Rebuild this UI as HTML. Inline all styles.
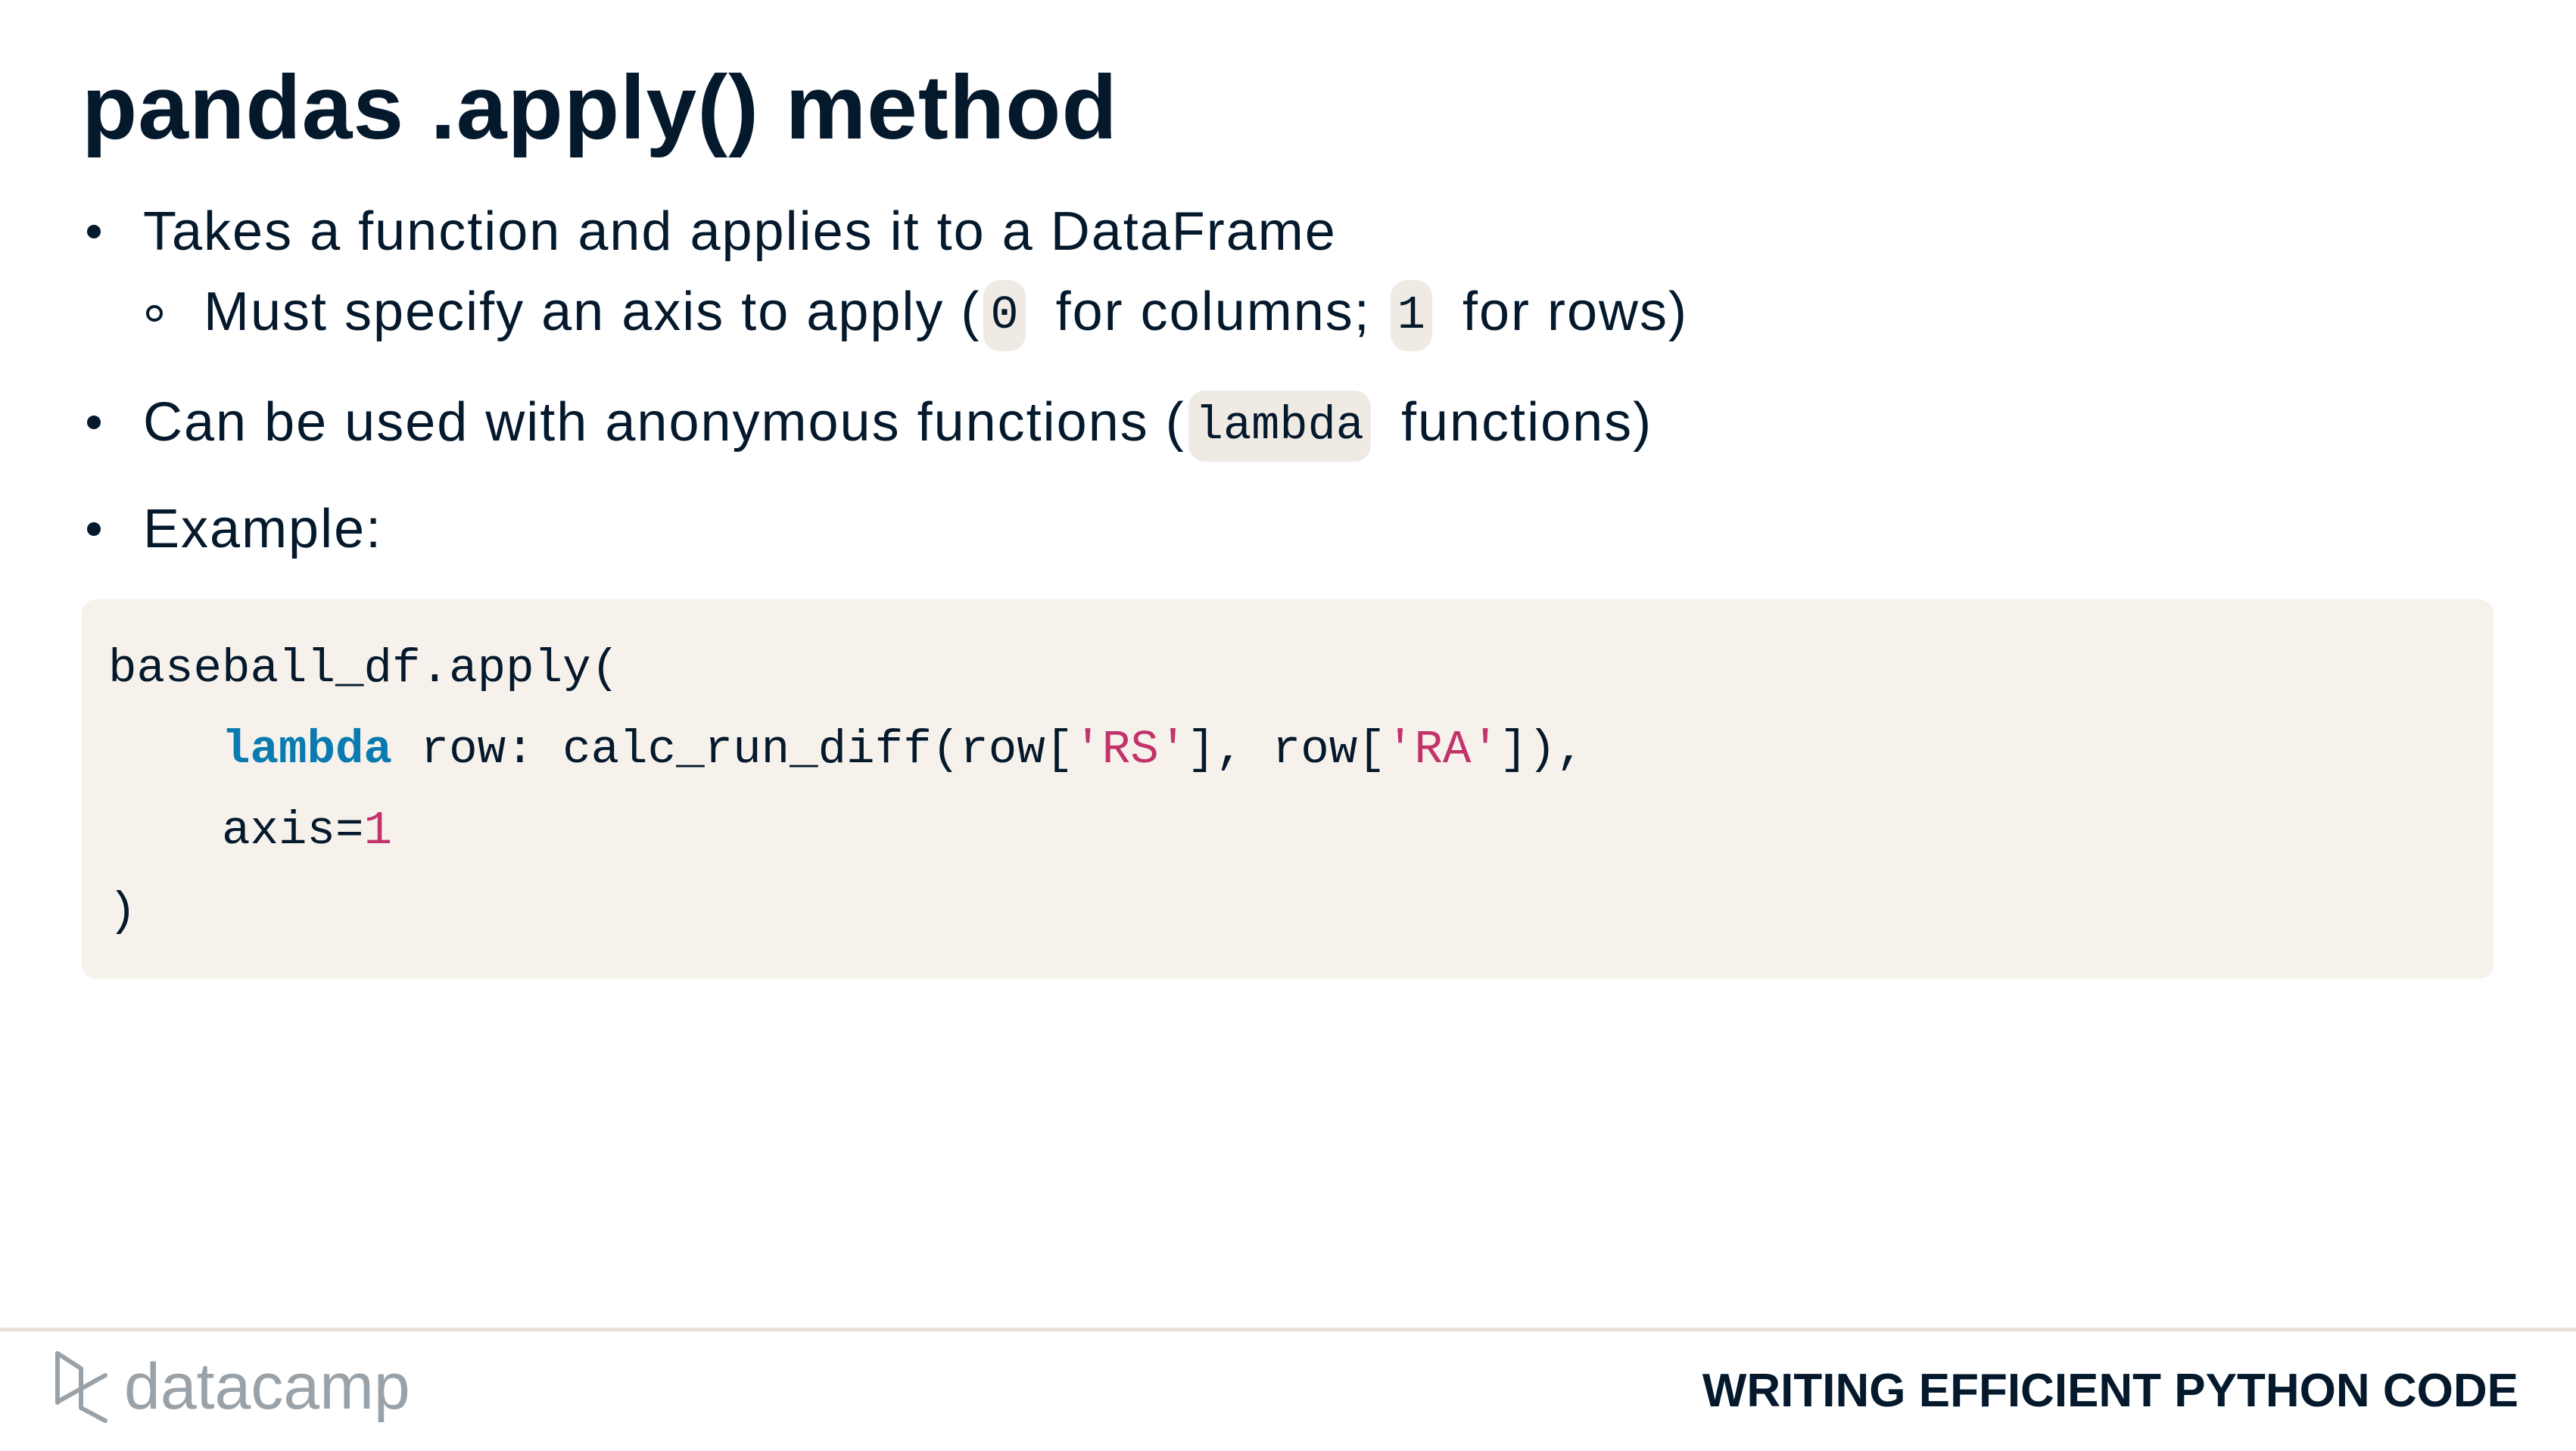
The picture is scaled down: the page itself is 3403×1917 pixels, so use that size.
<!DOCTYPE html>
<html><head><meta charset="utf-8"><style>
body{margin:0;width:3403px;height:1917px;background:#fff;position:relative;overflow:hidden;font-family:"Liberation Sans",sans-serif;color:#05192d}
.a{position:absolute;white-space:nowrap}
h1{position:absolute;left:108px;top:73px;margin:0;font-size:120px;font-weight:bold;letter-spacing:1px}
.t{font-size:72px;line-height:100px;letter-spacing:2px}
.c{display:inline-block;background:#efebe4;border-radius:22px;font-family:"Liberation Mono",monospace;font-size:62px;line-height:94px;padding:0 9px;vertical-align:middle;margin:0 40px 0 4px;letter-spacing:0}
.dot{position:absolute;width:18px;height:18px;border-radius:50%;background:#05192d}
.circ{position:absolute;width:14px;height:14px;border-radius:50%;border:4px solid #05192d}
.code{position:absolute;left:108px;top:792px;width:3186px;height:501px;background:#f6f2eb;border-radius:18px}
.code pre{margin:0;position:absolute;left:35px;top:38px;font-family:"Liberation Mono",monospace;font-size:62.5px;line-height:107px;color:#05192d}
.k{color:#0a7bb0;font-weight:bold}.s{color:#c2336c}
</style></head><body>
<h1>pandas .apply() method</h1>
<div class="dot" style="left:115px;top:297px"></div>
<div class="a t" style="left:189px;top:256px">Takes a function and applies it to a DataFrame</div>
<div class="circ" style="left:193px;top:403px"></div>
<div class="a t" style="left:269px;top:362px">Must specify an axis to apply (<span class="c">0</span>for columns; <span class="c">1</span>for rows)</div>
<div class="dot" style="left:115px;top:549px"></div>
<div class="a t" style="left:189px;top:508px">Can be used with anonymous functions (<span class="c">lambda</span>functions)</div>
<div class="dot" style="left:115px;top:690px"></div>
<div class="a t" style="left:189px;top:649px">Example:</div>
<div class="code"><pre>baseball_df.apply(
    <span class="k">lambda</span> row: calc_run_diff(row[<span class="s">'RS'</span>], row[<span class="s">'RA'</span>]),
    axis=<span class="s">1</span>
)</pre></div>
<div class="a" style="left:0;top:1754px;width:3403px;height:5px;background:#e5e1da"></div>
<svg class="a" style="left:68px;top:1784px" width="80" height="100" viewBox="0 0 80 100">
<path d="M8 4 L8 69 M8 4 L39 24 L39 76 L71 93 M8 68 L71 33" fill="none" stroke="#9aa2a9" stroke-width="6" stroke-linejoin="round" stroke-linecap="round"/>
</svg>
<div class="a" style="left:164px;top:1789px;font-size:86px;line-height:1;color:#9aa2a9">datacamp</div>
<div class="a" style="right:76px;top:1802px;font-size:62px;font-weight:bold;color:#05192d">WRITING EFFICIENT PYTHON CODE</div>
</body></html>
